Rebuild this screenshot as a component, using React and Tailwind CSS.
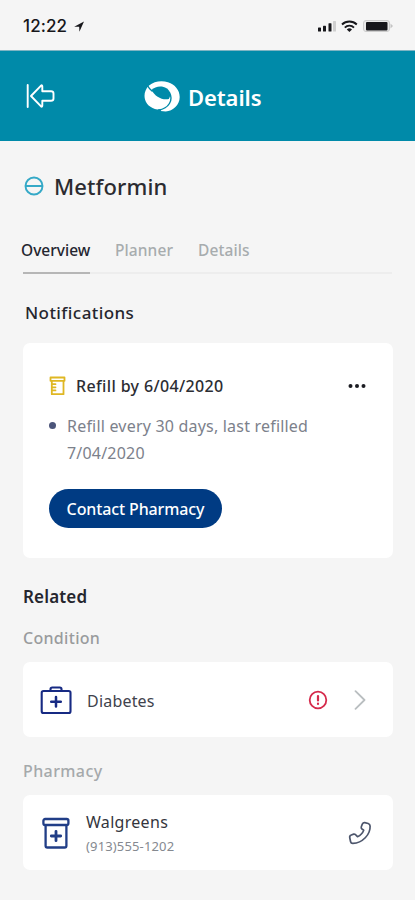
import React from "react";

const stroke = { fill: "none", strokeLinecap: "round", strokeLinejoin: "round" };

function StatusBar() {
  return (
    <div className="flex h-[50px] items-center justify-between pr-[22px] pl-[23px] text-[#17171b]">
      <div className="flex items-center gap-[6px] pt-[2px]">
        <span className="w-[45px] font-['Inter',sans-serif] text-[17px] leading-5 font-medium tracking-[0.1px] whitespace-nowrap">12:22</span>
        <svg width="11" height="11" viewBox="0 0 11 11">
          <path d="M10 .5.2 5.700h5L5.400 10.800z" fill="currentColor" />
        </svg>
      </div>
      <div className="flex items-center pt-[2px]">
        <svg width="76" height="14" viewBox="0 0 76 14">
          <rect x="1" y="8.5" width="3" height="4" rx=".6" fill="currentColor" />
          <rect x="6" y="6.8" width="3" height="5.7" rx=".6" fill="currentColor" />
          <rect x="11.5" y="4.2" width="3" height="8.3" rx=".6" fill="currentColor" />
          <rect x="16" y="2" width="3" height="10.5" rx=".6" fill="#cfcfcf" />
          <g {...stroke} stroke="currentColor" strokeWidth="1.900" strokeLinecap="butt">
            <path d="M25 5.500a10.500 10.500 0 0 1 14.800 0" />
            <path d="M27.800 8.600a6.400 6.400 0 0 1 9.200 0" />
          </g>
          <path d="M29.800 10.500a3.700 3.700 0 0 1 5.200 0l-2.600 2.500z" fill="currentColor" />
          <rect x="46.500" y="1.500" width="26" height="11" rx="2.500" fill="#e9e9e9" stroke="#cccccc" />
          <rect x="49" y="3" width="21.500" height="8.500" rx="1" fill="currentColor" />
          <path d="M73.500 4.500 76 7l-2.500 2.500z" fill="#c4c4c4" />
        </svg>
      </div>
    </div>
  );
}

function Header() {
  return (
    <header className="flex h-[91px] items-center border-t border-[#7fb4c3] bg-[#008aa9] pl-[25px] text-white">
      <svg width="31" height="24" viewBox="0 0 31 24" {...stroke} stroke="white" strokeWidth="1.900">
        <path d="M2.700 1v22M6 12 15.800 1.800q1.500-1.300 1.500.6V7.200H26q2.500 0 2.500 2.300v5q0 2.300-2.500 2.300h-8.700v4.800q0 1.900-1.500.6z" />
      </svg>
      <svg width="36" height="31" viewBox="0 0 36 31" className="ml-[88px]">
        <path fill="white" d="M5 4.500C10 0 18-.8 24 1.200 31 3.500 35.700 9 35.700 16c0 8-6.700 14-14 14.500l-5-.6 1-1.300C9.500 29.200 3 25 1 18.500-.3 13.500 1 8.500 5 4.500z" />
        <path fill="#008aa9" d="M7.500 9C11 5.200 18 4.300 22.500 7.200c4 2.700 4.700 7 2.300 10.800C18 19.500 11 15.500 7.500 9z" />
        <path {...stroke} stroke="#008aa9" strokeWidth="1.400" d="M3.500 4.500Q5 7.500 8 10M25.500 11.500C29.500 19 25 27.500 14.500 29" />
      </svg>
      <h1 className="ml-[8px] pt-[1px] text-[22px] leading-[30px] font-semibold tracking-[-0.1px] whitespace-nowrap">Details</h1>
    </header>
  );
}

function Tabs() {
  return (
    <nav className="mx-[23px] flex h-[36px] border-b-2 border-[#ededed] text-[15.5px] leading-6 font-medium whitespace-nowrap text-[#a7acae]">
      <span className="relative -ml-[2px] h-[36px] w-[70px] text-[#24252f]">
        Overview
        <span className="absolute bottom-0 left-[2px] h-[2px] w-[67px] bg-[#b6b6b6]" />
      </span>
      <span className="ml-[24px] w-[58px] tracking-[0.1px]">Planner</span>
      <span className="ml-[25px] tracking-[0.1px]">Details</span>
    </nav>
  );
}

function NotificationCard() {
  return (
    <section className="mr-[22px] ml-[23px] mt-[17px] h-[215px] rounded-[7px] bg-white px-[26px] pt-[31px]">
      <div className="flex h-6 items-center">
        <svg width="18" height="20" viewBox="0 0 18 20" {...stroke} stroke="#dfb723" strokeWidth="1.800">
          <path d="M1.500 1.500h14v3.300h-14zM2.800 5v13.200h11.700V5M3.500 8.200h3M3.500 11.300h3M3.500 14.400h3" />
        </svg>
        <h3 className="ml-[9px] text-[16px] font-medium tracking-[0.36px] whitespace-nowrap text-[#2c2d33]">Refill by 6/04/2020</h3>
        <svg width="20" height="6" viewBox="0 0 20 6" className="ml-auto" fill="#1b1c22">
          <circle cx="3.500" cy="3" r="2" /><circle cx="10" cy="3" r="2" /><circle cx="16.500" cy="3" r="2" />
        </svg>
      </div>
      <div className="mt-[15px] flex text-[16px] leading-[27px] tracking-[0.2px] text-[#7c818b]">
        <span className="mt-[9px] mr-[11px] size-[7px] shrink-0 rounded-full bg-[#4c557a]" />
        <p className="whitespace-nowrap">Refill every 30 days, last refilled<br />7/04/2020</p>
      </div>
      <button className="mt-[22px] flex h-[39px] w-[173px] items-center justify-center rounded-full bg-[#003b83] pt-[1px] text-[16px] font-medium tracking-[-0.12px] whitespace-nowrap text-white">Contact Pharmacy</button>
    </section>
  );
}

function ConditionCard() {
  return (
    <div className="mr-[22px] ml-[23px] mt-[12px] flex h-[75px] items-center rounded-[7px] bg-white pr-[27px] pl-[17px]">
      <svg width="32" height="30" viewBox="0 0 32 30" {...stroke} stroke="#172a83" strokeWidth="2.100">
        <rect x="1.700" y="6" width="28.800" height="22" rx="1.800" />
        <path d="M10.500 6V4.200q0-1.700 1.700-1.700h7.600q1.700 0 1.700 1.700V6" />
        <path d="M16 12v9.600M11.200 16.800h9.600" strokeWidth="2.500" />
      </svg>
      <span className="ml-[15px] pt-[2px] text-[16px] tracking-[0.2px] whitespace-nowrap text-[#41434c]">Diabetes</span>
      <svg width="20" height="20" viewBox="0 0 20 20" className="ml-auto" {...stroke} stroke="#d52a4b" strokeWidth="1.800">
        <circle cx="10" cy="10" r="8.300" />
        <path d="M10 6v4.500M10 13.700v.2" strokeWidth="2.200" />
      </svg>
      <svg width="12" height="20" viewBox="0 0 12 20" className="ml-[26px]" {...stroke} stroke="#b9bec0" strokeWidth="1.800">
        <path d="m1.500 1.200 9 8.800-9 8.800" />
      </svg>
    </div>
  );
}

function PharmacyCard() {
  return (
    <div className="mr-[22px] ml-[23px] mt-[12px] flex h-[75px] items-center rounded-[7px] bg-white pr-[20px] pl-[17px]">
      <svg width="32" height="34" viewBox="0 0 32 34" {...stroke} stroke="#213e87" strokeWidth="2.300">
        <rect x="3.400" y="3" width="25" height="6" rx="1.700" />
        <path d="M5.600 9.500v20.300q0 1.700 1.700 1.700h17.400q1.700 0 1.700-1.700V9.500" />
        <path d="M16 15.300v9.400M11.300 20h9.400" strokeWidth="2.800" />
      </svg>
      <div className="ml-[14px] pt-[2px] whitespace-nowrap">
        <div className="text-[16px] leading-6 tracking-[0.3px] text-[#34353d]">Walgreens</div>
        <div className="text-[13px] leading-6 tracking-[0.15px] text-[#858990]">(913)555-1202</div>
      </div>
      <svg width="26" height="26" viewBox="0 0 26 26" className="ml-auto" {...stroke} stroke="#4d566c" strokeWidth="1.700">
        <path d="M2.800 18q-.6-2.400 1.500-3l2.400-.9q1.600-.3 2.500 1.200l1.300 1.400q4.600-2.100 6.200-6.500l-1.700-1.200q-1.200-.9-.7-2.300l1-2.600q.8-1.600 2.500-1.400l3.400.8q1.800.6 1.900 2.600C23.500 14.500 15.500 23 5.900 23.400q-1.900.1-2.300-1.700z" />
      </svg>
    </div>
  );
}

export default function App() {
  return (
    <div className="h-[900px] w-[415px] overflow-hidden bg-[#f5f5f5] font-['Noto_Sans',sans-serif]">
      <StatusBar />
      <Header />
      <div className="mt-[29px] flex h-[32px] items-center pl-[24px]">
        <svg width="20" height="20" viewBox="0 0 20 20" {...stroke} stroke="#35a9c7" strokeWidth="1.900">
          <circle cx="10" cy="10" r="8.500" /><path d="M2 10h16" />
        </svg>
        <h2 className="ml-[10px] text-[22px] leading-[30px] font-medium tracking-[0.1px] whitespace-nowrap text-[#2b2b30]">Metformin</h2>
      </div>
      <div className="h-[36px]" />
      <Tabs />
      <h2 className="mt-[26px] h-[26px] pl-[25px] text-[17px] leading-[26px] font-medium tracking-[0.42px] whitespace-nowrap text-[#25262e]">Notifications</h2>
      <NotificationCard />
      <h2 className="mt-[26px] h-[26px] pl-[23px] text-[17px] leading-[26px] font-semibold tracking-[0.15px] whitespace-nowrap text-[#25262e]">Related</h2>
      <h3 className="mt-[16px] h-[24px] pl-[23px] text-[16px] leading-6 font-medium tracking-[0.3px] whitespace-nowrap text-[#999b9d]">Condition</h3>
      <ConditionCard />
      <h3 className="mt-[22px] h-[24px] pl-[23px] text-[16px] leading-6 font-medium tracking-[0.4px] whitespace-nowrap text-[#a5a9ab]">Pharmacy</h3>
      <PharmacyCard />
    </div>
  );
}
